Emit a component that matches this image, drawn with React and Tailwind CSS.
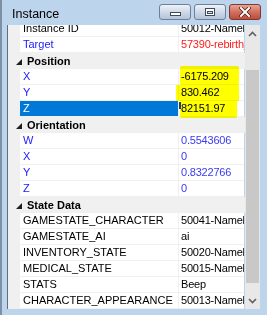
import React from "react";

const F = { fontFamily: '"Liberation Sans", Arial, sans-serif' };

function Tri() {
  return (
    <svg width="6" height="6" viewBox="0 0 6 6" className="block">
      <path d="M6 0 L6 6 L0 6 Z" fill="#1e1e1e" />
    </svg>
  );
}

function Cat({ label }) {
  return (
    <div className="flex h-[16px] bg-[#f0f0f0]">
      <div className="w-[12px] flex items-center justify-end pt-[1px]">
        <div className="mr-[-2px]"><Tri /></div>
      </div>
      <div className="pl-[7px] font-bold text-[11px] leading-[16px] text-black">{label}</div>
    </div>
  );
}

function Row({ name, value, nameCls = "text-black", valCls = "text-black", selected }) {
  return (
    <div className="flex h-[16px]">
      <div className="w-[12px] bg-[#f0f0f0]" />
      <div
        className={
          "w-[159px] pl-[3px] border-b border-r border-[#f0f0f0] text-[11px] leading-[15px] whitespace-nowrap overflow-hidden " +
          (selected ? "bg-[#0078d7] text-white" : "bg-white " + nameCls)
        }
      >
        {name}
      </div>
      <div className={"w-[65px] pl-[2px] border-b border-[#f0f0f0] bg-white text-[11px] tracking-[-0.2px] leading-[15px] whitespace-nowrap overflow-hidden " + valCls}>
        {value}
      </div>
    </div>
  );
}

function CapBtn({ children, close }) {
  return (
    <div
      className={
        "w-[32px] h-[16px] rounded-[3px] border flex items-center justify-center " +
        (close
          ? "border-[#7a3a33] bg-gradient-to-b from-[#e8a595] via-[#d0705f] to-[#c04a36]"
          : "border-[#6f7f94] bg-gradient-to-b from-[#eef2f8] via-[#cfdae8] to-[#b4c4da]")
      }
    >
      {children}
    </div>
  );
}

export default function App() {
  return (
    <div className="relative w-[267px] h-[315px] bg-[#bcd4ec] border-l-2 border-[#7d90a6] flex flex-col overflow-hidden" style={F}>
      {/* title bar */}
      <div className="h-[25px] flex items-start shrink-0">
        <div className="pl-[10px] pt-[6px] text-[12.5px] leading-[16px] text-black">Instance</div>
        <div className="ml-auto mr-[6px] mt-[4px] flex gap-[3px]">
          <CapBtn>
            <div className="w-[11px] h-[4px] bg-white border border-[#3c4a5c] mt-[4px]" />
          </CapBtn>
          <CapBtn>
            <div className="w-[10px] h-[8px] border border-[#3c4a5c] bg-white flex items-center justify-center">
              <div className="w-[6px] h-[3px] border border-[#3c4a5c] bg-[#d8e2ee]" />
            </div>
          </CapBtn>
          <CapBtn close>
            <svg width="12" height="10" viewBox="0 0 12 10">
              <path d="M2 1 L10 9 M10 1 L2 9" stroke="#4a1a12" strokeWidth="3.4" strokeLinecap="square" />
              <path d="M2 1 L10 9 M10 1 L2 9" stroke="#ffffff" strokeWidth="2" strokeLinecap="square" />
            </svg>
          </CapBtn>
        </div>
      </div>
      {/* content */}
      <div className="ml-[5px] w-[253px] h-[284px] flex border-l border-[#5d6f86] shrink-0">
        <div className="w-[237px] overflow-hidden">
          <div className="mt-[-4px]">
            <Row name="Instance ID" value="50012-Nameless" />
            <Row name="Target" value="57390-rebirth_" nameCls="text-[#1a1aff]" valCls="text-[#ff1a1a]" />
            <Cat label="Position" />
            <Row name="X" value="-6175.209" nameCls="text-[#1a1aff]" />
            <Row name="Y" value="830.462" nameCls="text-[#1a1aff]" />
            <Row name="Z" value="82151.97" selected />
            <Cat label="Orientation" />
            <Row name="W" value="0.5543606" nameCls="text-[#1a1aff]" valCls="text-[#3a3af0]" />
            <Row name="X" value="0" nameCls="text-[#1a1aff]" valCls="text-[#3a3af0]" />
            <Row name="Y" value="0.8322766" nameCls="text-[#1a1aff]" valCls="text-[#3a3af0]" />
            <Row name="Z" value="0" nameCls="text-[#1a1aff]" valCls="text-[#3a3af0]" />
            <Cat label="State Data" />
            <Row name="GAMESTATE_CHARACTER" value="50041-Nameless" />
            <Row name="GAMESTATE_AI" value="ai" />
            <Row name="INVENTORY_STATE" value="50020-Nameless" />
            <Row name="MEDICAL_STATE" value="50015-Nameless" />
            <Row name="STATS" value="Beep" />
            <Row name="CHARACTER_APPEARANCE" value="50013-Nameless" />
          </div>
        </div>
        {/* scrollbar */}
        <div className="w-[15px] bg-[#e8e8e8] flex flex-col">
          <div className="h-[17px] flex items-center justify-center">
            <svg width="9" height="6" viewBox="0 0 9 6">
              <path d="M1 5 L4.5 1.5 L8 5" fill="none" stroke="#606060" strokeWidth="1.6" />
            </svg>
          </div>
          <div className="h-[28px]" />
          <div className="h-[213px] bg-[#c8c8c8] mx-[1px]" />
          <div className="flex-1 flex items-end justify-center pb-[5px]">
            <svg width="9" height="6" viewBox="0 0 9 6">
              <path d="M1 1 L4.5 4.5 L8 1" fill="none" stroke="#606060" strokeWidth="1.6" />
            </svg>
          </div>
        </div>
      </div>
      {/* yellow marker annotation */}
      <div className="pointer-events-none absolute left-[178px] top-[66px] w-[59px] h-[19px] bg-[#ffff00] mix-blend-multiply rounded-[2px]" />
      <div className="pointer-events-none absolute left-[174px] top-[85px] w-[63px] h-[16px] bg-[#ffff00] mix-blend-multiply" />
      <div className="pointer-events-none absolute left-[178px] top-[101px] w-[57px] h-[17px] bg-[#ffff00] mix-blend-multiply rounded-b-[2px]" />
      <div className="pointer-events-none absolute left-[177px] top-[102px] w-[2px] h-[7px] bg-[#1b3a8a]" />
    </div>
  );
}
